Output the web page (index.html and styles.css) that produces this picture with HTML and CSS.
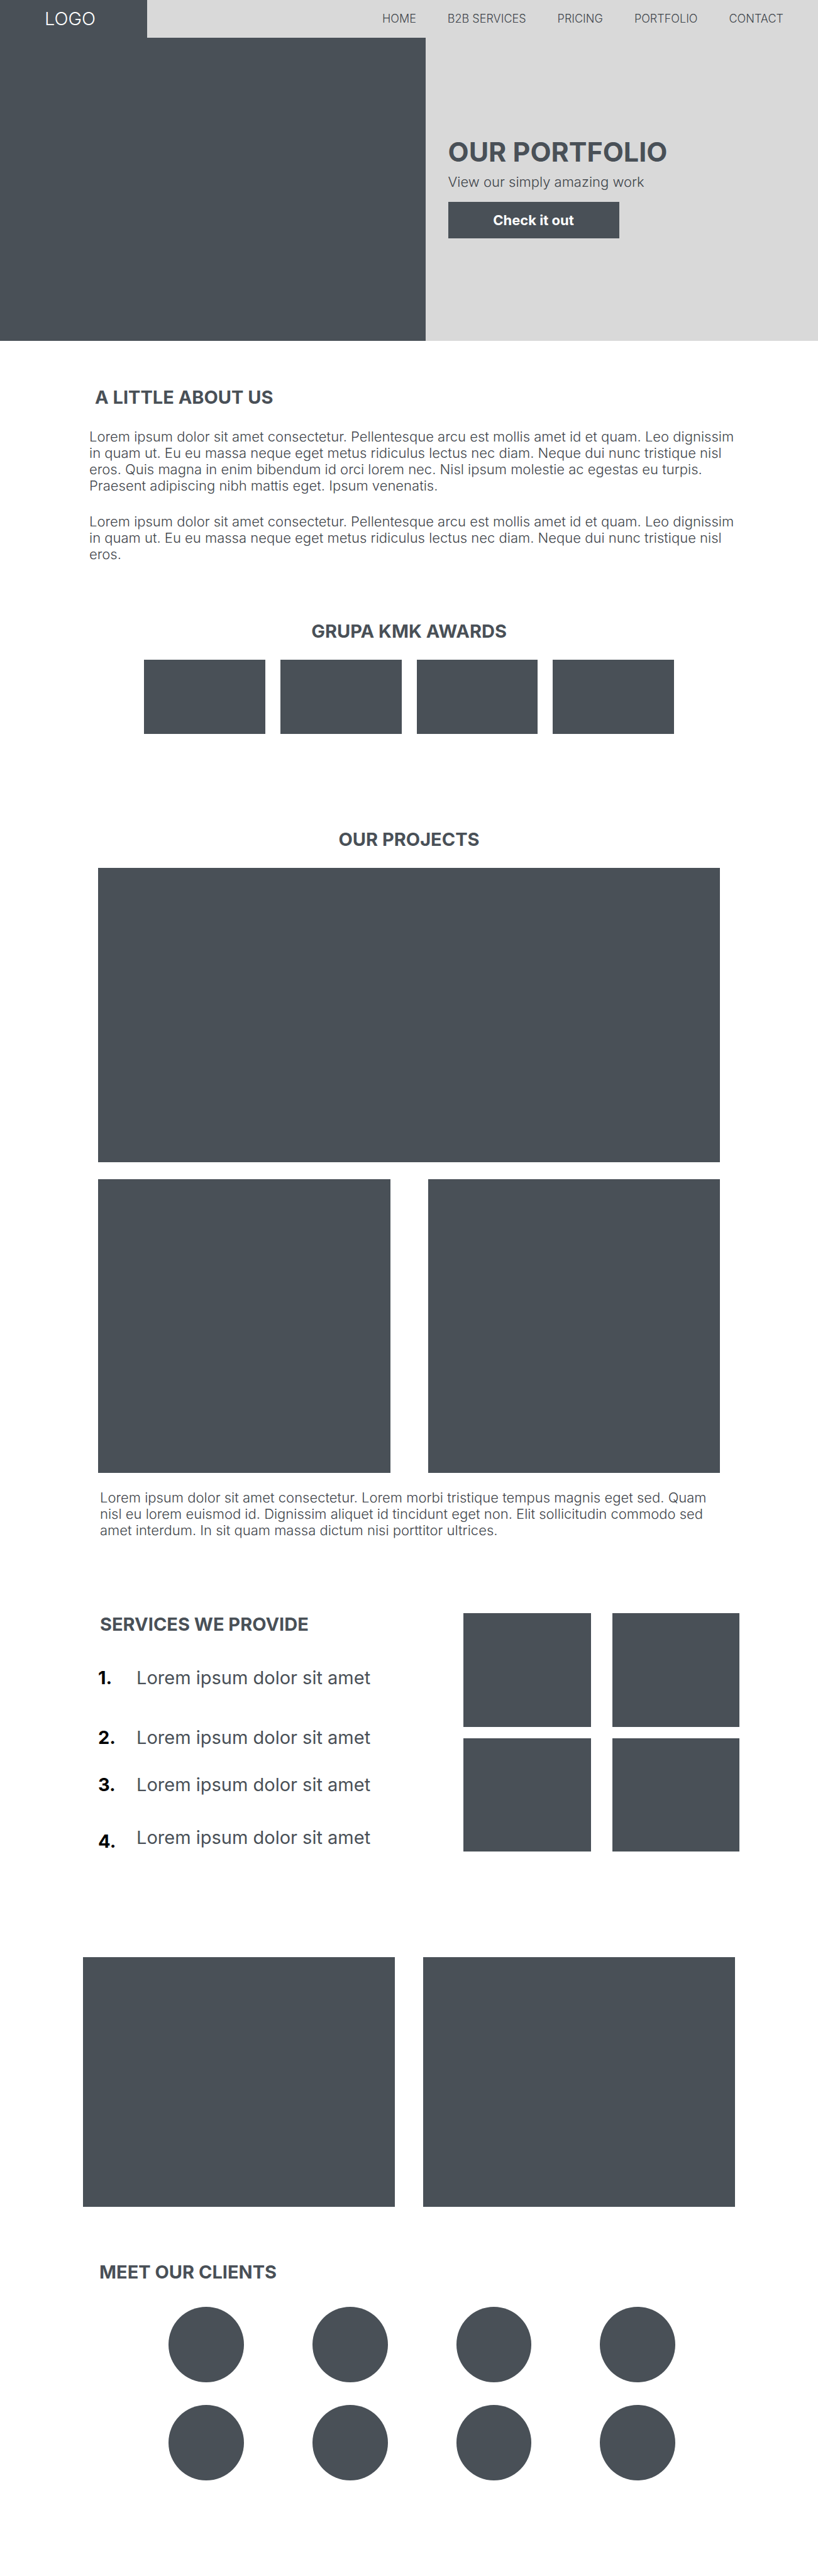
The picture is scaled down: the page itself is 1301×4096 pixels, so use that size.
FILE: index.html
```html
<!DOCTYPE html>
<html lang="en">
<head>
  <meta charset="utf-8">
  <meta name="viewport" content="width=device-width, initial-scale=1">
  <title>Our Portfolio</title>
  <link rel="stylesheet" href="styles.css">
</head>
<body>
  <header class="topbar">
    <a class="logo" href="#">LOGO</a>
    <nav class="nav" aria-label="Main">
      <a href="#">HOME</a>
      <a href="#services">B2B SERVICES</a>
      <a href="#">PRICING</a>
      <a href="#projects">PORTFOLIO</a>
      <a href="#clients">CONTACT</a>
    </nav>
  </header>

  <main>
    <section class="hero">
      <div class="hero-image"></div>
      <div class="hero-text">
        <h1>OUR PORTFOLIO</h1>
        <p>View our simply amazing work</p>
        <button class="cta" type="button">Check it out</button>
      </div>
    </section>

    <section class="about">
      <h2>A LITTLE ABOUT US</h2>
      <p>Lorem ipsum dolor sit amet consectetur. Pellentesque arcu est mollis amet id et quam. Leo dignissim in quam ut. Eu eu massa neque eget metus ridiculus lectus nec diam. Neque dui nunc tristique nisl eros. Quis magna in enim bibendum id orci lorem nec. Nisl ipsum molestie ac egestas eu turpis. Praesent adipiscing nibh mattis eget. Ipsum venenatis.</p>
      <p>Lorem ipsum dolor sit amet consectetur. Pellentesque arcu est mollis amet id et quam. Leo dignissim in quam ut. Eu eu massa neque eget metus ridiculus lectus nec diam. Neque dui nunc tristique nisl eros.</p>
    </section>

    <section class="awards">
      <h2>GRUPA KMK AWARDS</h2>
      <div class="award-grid">
        <div class="tile"></div>
        <div class="tile"></div>
        <div class="tile"></div>
        <div class="tile"></div>
      </div>
    </section>

    <section class="projects" id="projects">
      <h2>OUR PROJECTS</h2>
      <div class="project-grid">
        <div class="tile tile-wide"></div>
        <div class="tile"></div>
        <div class="tile"></div>
      </div>
      <p>Lorem ipsum dolor sit amet consectetur. Lorem morbi tristique tempus magnis eget sed. Quam nisl eu lorem euismod id. Dignissim aliquet id tincidunt eget non. Elit sollicitudin commodo sed amet interdum. In sit quam massa dictum nisi porttitor ultrices.</p>
    </section>

    <section class="services" id="services">
      <div class="service-text">
        <h2>SERVICES WE PROVIDE</h2>
        <ol class="service-list">
          <li><b>1.</b><span>Lorem ipsum dolor sit amet</span></li>
          <li><b>2.</b><span>Lorem ipsum dolor sit amet</span></li>
          <li><b>3.</b><span>Lorem ipsum dolor sit amet</span></li>
          <li><b>4.</b><span>Lorem ipsum dolor sit amet</span></li>
        </ol>
      </div>
      <div class="service-grid">
        <div class="tile"></div>
        <div class="tile"></div>
        <div class="tile"></div>
        <div class="tile"></div>
      </div>
    </section>

    <section class="gallery">
      <div class="tile"></div>
      <div class="tile"></div>
    </section>

    <section class="clients" id="clients">
      <h2>MEET OUR CLIENTS</h2>
      <div class="client-grid">
        <div class="client"></div>
        <div class="client"></div>
        <div class="client"></div>
        <div class="client"></div>
        <div class="client"></div>
        <div class="client"></div>
        <div class="client"></div>
        <div class="client"></div>
      </div>
    </section>
  </main>
</body>
</html>
```
FILE: styles.css
```css
:root {
  --slate: #495057;
  --ink: #3f454b;
  --mist: #d9d9d9;
}

* {
  box-sizing: border-box;
}

body {
  margin: 0;
  background: #fff;
  color: var(--ink);
  font-family: Inter, "Liberation Sans", sans-serif;
  font-size: 22px;
  font-weight: 300;
  line-height: 26px;
}

h1,
h2,
p,
ol {
  margin: 0;
}

h1,
h2 {
  color: var(--slate);
  font-weight: 700;
}

h2 {
  font-size: 29px;
  line-height: 36px;
}

a {
  color: inherit;
  text-decoration: none;
}

.tile {
  background: var(--slate);
}

/* Header */
.topbar {
  display: flex;
  height: 60px;
  background: var(--mist);
}

.logo {
  display: flex;
  align-items: center;
  width: 18%;
  padding-left: 71px;
  background: var(--slate);
  color: #fff;
  font-size: 29px;
}

.nav {
  display: flex;
  flex: 1;
  align-items: center;
  justify-content: flex-end;
  gap: 50px;
  padding-right: 55px;
  font-size: 18px;
}

/* Hero */
.hero {
  display: grid;
  grid-template-columns: 52% 1fr;
  min-height: 482px;
  background: var(--mist);
}

.hero-image {
  background: var(--slate);
}

.hero-text {
  display: flex;
  flex-direction: column;
  align-items: flex-start;
  padding: 155px 36px 0;
}

.hero-text h1 {
  font-size: 43px;
  line-height: 52px;
}

.hero-text p {
  margin-top: 9px;
}

.cta {
  width: 272px;
  height: 58px;
  margin-top: 19px;
  border: 0;
  background: var(--slate);
  color: #fff;
  font: inherit;
  font-weight: 700;
}

/* About */
.about {
  padding: 72px 112px 0 142px;
}

.about h2 {
  padding-left: 9px;
}

.about p {
  margin-top: 31px;
}

/* Awards */
.awards {
  padding: 92px 229px 0;
  text-align: center;
}

.award-grid {
  display: grid;
  grid-template-columns: repeat(4, 1fr);
  gap: 24px;
  margin-top: 27px;
}

.award-grid .tile {
  aspect-ratio: 192 / 118;
}

/* Projects */
.projects {
  padding: 150px 156px 0;
}

.projects h2 {
  text-align: center;
}

.project-grid {
  display: grid;
  grid-template-columns: 1fr 1fr;
  gap: 27px 60px;
  margin-top: 27px;
}

.project-grid .tile {
  aspect-ratio: 464 / 467;
}

.project-grid .tile-wide {
  grid-column: 1 / -1;
  aspect-ratio: 988 / 467;
}

.projects p {
  margin-top: 26px;
  padding-left: 3px;
}

/* Services */
.services {
  display: grid;
  grid-template-columns: 1fr 439px;
  padding: 119px 125px 0 156px;
}

.services h2 {
  padding-left: 3px;
}

.service-list {
  margin-top: 49px;
  padding: 0;
  list-style: none;
  color: var(--slate);
  font-size: 29px;
  font-weight: 400;
  line-height: 36px;
}

.service-list li {
  display: grid;
  grid-template-columns: 61px 1fr;
}

.service-list li:nth-child(2) {
  margin-top: 59px;
}

.service-list li:nth-child(3) {
  margin-top: 39px;
}

.service-list li:nth-child(4) {
  min-height: 42px;
  margin-top: 48px;
}

.service-list b {
  align-self: end;
  color: #000;
  font-weight: 700;
}

.service-grid {
  display: grid;
  grid-template-columns: 1fr 1fr;
  align-content: start;
  gap: 18px 34px;
}

.service-grid .tile {
  aspect-ratio: 202 / 180;
}

/* Gallery */
.gallery {
  display: grid;
  grid-template-columns: 1fr 1fr;
  gap: 45px;
  padding: 166px 132px 0;
}

.gallery .tile {
  aspect-ratio: 496 / 397;
}

/* Clients */
.clients {
  padding: 86px 158px 151px;
}

.client-grid {
  display: grid;
  grid-template-columns: repeat(4, 1fr);
  gap: 36px 109px;
  margin-top: 37px;
  padding: 0 69px 0 110px;
}

.client {
  aspect-ratio: 1;
  border-radius: 50%;
  background: var(--slate);
}
```
